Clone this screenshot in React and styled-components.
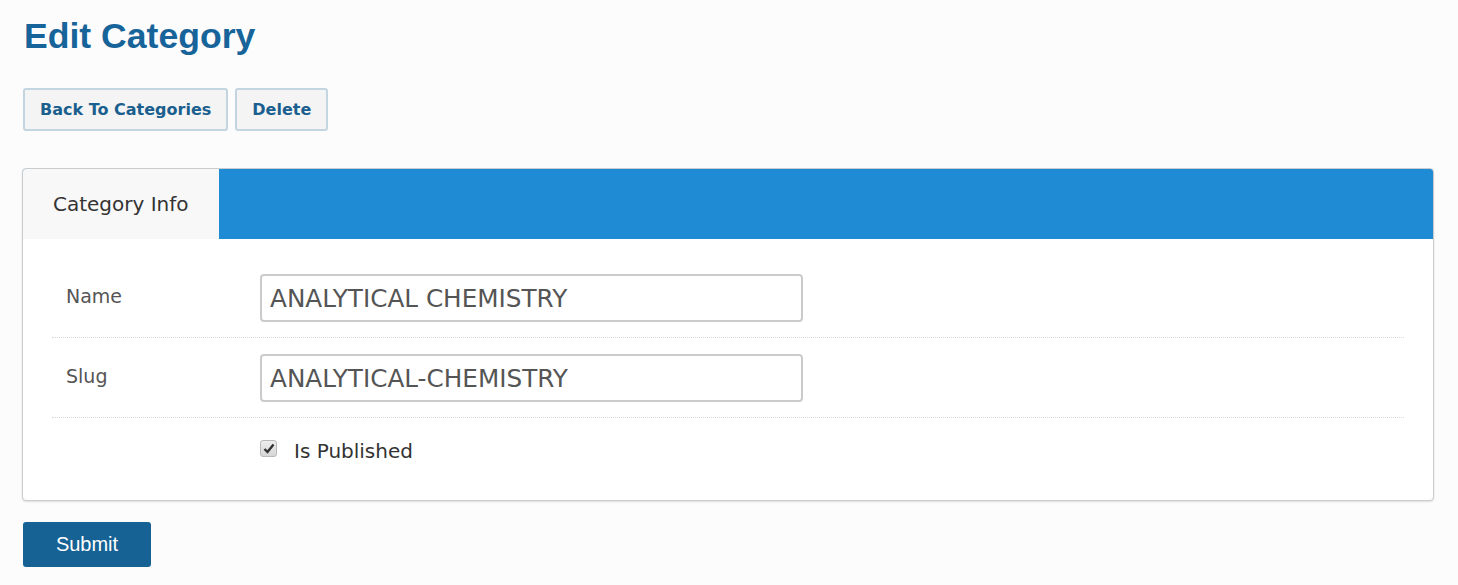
import React from 'react';
import styled, { createGlobalStyle } from 'styled-components';

const GlobalStyle = createGlobalStyle`
    html, body {
        margin: 0;
        padding: 0;
        background: #fcfcfc;
    }
    * {
        box-sizing: border-box;
    }
`

const Page = styled.div`
    padding: 14px 23px 18px 23px;
    font-family: "DejaVu Sans", Verdana, sans-serif;
`

const Title = styled.h1`
    margin: 0 0 0 1px;
    font-family: "Liberation Sans", Arial, sans-serif;
    font-size: 35.6px;
    font-weight: bold;
    color: #17649a;
    line-height: 44px;
`

const Toolbar = styled.div`
    display: flex;
    gap: 7px;
    margin-top: 30px;
`

const LinkButton = styled.button`
    height: 43px;
    padding: 0 15px;
    border: 2px solid #c3d5e1;
    border-radius: 3px;
    background: #f4f4f4;
    color: #1a5f8e;
    font-family: "DejaVu Sans", Verdana, sans-serif;
    font-weight: bold;
    font-size: 16px;
    cursor: pointer;
`

const Card = styled.div`
    margin-top: 37px;
    margin-right: 1px;
    margin-left: -1px;
    background: #fff;
    border: 1px solid #c8cccf;
    border-radius: 4px;
    box-shadow: 0 1px 2px rgba(0, 0, 0, 0.12);
    overflow: hidden;
`

const TabBar = styled.div`
    display: flex;
    height: 70px;
    background: #1f8bd4;
`

const Tab = styled.div`
    display: flex;
    align-items: center;
    width: 196px;
    padding-left: 30px;
    background: ${p => (p.active ? '#f8f8f8' : 'transparent')};
    color: #333;
    font-size: 20px;
`

const Body = styled.div`
    padding: 35px 29px 37px 29px;
`

const Row = styled.div`
    display: flex;
    align-items: center;
    padding-bottom: 15px;
    margin-bottom: 16px;
    border-bottom: ${p => (p.last ? 'none' : '1px dotted #d8d8d8')};
    ${p => p.last && 'padding-top: 5px; padding-bottom: 0; margin-bottom: 0;'}
`

const Label = styled.label`
    width: 208px;
    padding-left: 14px;
    padding-bottom: 5px;
    color: #555;
    font-size: 19px;
`

const TextInput = styled.input`
    width: 543px;
    height: 48px;
    padding: 0 8px;
    border: 2px solid #cbcbcb;
    border-radius: 4px;
    color: #555;
    font-family: "DejaVu Sans", Verdana, sans-serif;
    font-size: 24.7px;
    outline: none;
`

const CheckLabel = styled.label`
    display: flex;
    align-items: center;
    gap: 17px;
    color: #333;
    font-size: 20px;
`

const CheckBox = styled.span`
    display: inline-flex;
    align-items: center;
    justify-content: center;
    width: 17px;
    height: 17px;
    margin-top: -5px;
    border: 1px solid #b9b9b9;
    border-radius: 3px;
    background: linear-gradient(#eeeeee, #d6d6d6);
`

const SubmitButton = styled.button`
    margin-top: 21px;
    width: 128px;
    height: 45px;
    border: none;
    border-radius: 3px;
    background: #166294;
    color: #fff;
    font-family: "Liberation Sans", Arial, sans-serif;
    font-size: 20px;
    cursor: pointer;
`

export default function App() {
    return (
        <Page>
            <GlobalStyle />
            <Title>Edit Category</Title>
            <Toolbar>
                <LinkButton>Back To Categories</LinkButton>
                <LinkButton>Delete</LinkButton>
            </Toolbar>
            <Card>
                <TabBar>
                    <Tab active>Category Info</Tab>
                </TabBar>
                <Body>
                    <Row>
                        <Label>Name</Label>
                        <TextInput defaultValue="ANALYTICAL CHEMISTRY" />
                    </Row>
                    <Row>
                        <Label>Slug</Label>
                        <TextInput defaultValue="ANALYTICAL-CHEMISTRY" />
                    </Row>
                    <Row last>
                        <Label />
                        <CheckLabel>
                            <CheckBox>
                                <svg width="12" height="11" viewBox="0 0 12 11">
                                    <path d="M1.5 6 L4.5 9 L10.5 1.5" fill="none" stroke="#333" strokeWidth="2.4" />
                                </svg>
                            </CheckBox>
                            Is Published
                        </CheckLabel>
                    </Row>
                </Body>
            </Card>
            <SubmitButton>Submit</SubmitButton>
        </Page>
    );
}
